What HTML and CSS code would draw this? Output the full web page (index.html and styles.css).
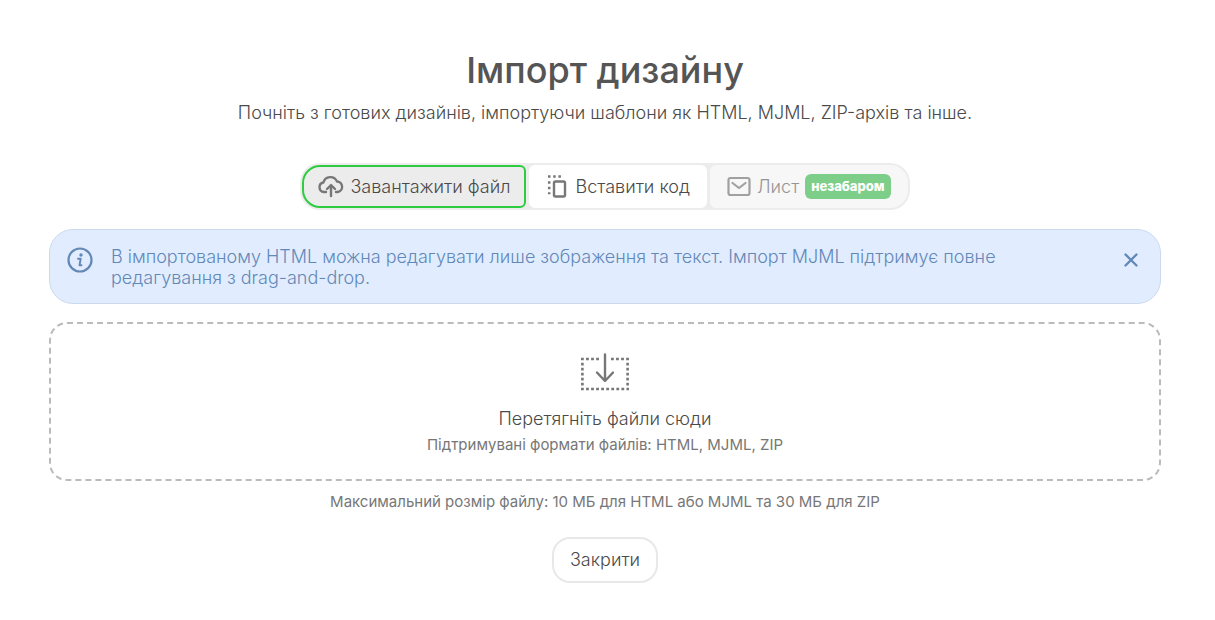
FILE: index.html
```html
<!DOCTYPE html>
<html lang="uk">

<head>
    <meta charset="UTF-8">
    <meta name="viewport" content="width=device-width, initial-scale=1.0">
    <title>Імпорт дизайну</title>
    <link rel="stylesheet" href="styles.css">
</head>

<body>
    <main class="import">
        <h1 class="title">Імпорт дизайну</h1>
        <p class="subtitle">Почніть з готових дизайнів, імпортуючи шаблони як HTML, MJML, ZIP-архів та інше.</p>

        <div class="tabs">
            <button type="button" class="tab tab-active">
                <svg class="tab-icon" width="26" height="24" viewBox="0 0 26 24" fill="none" stroke="currentColor" stroke-width="2.4" stroke-linecap="round" stroke-linejoin="round">
                    <path d="M8 17H6a4.800 4.800 0 0 1-.6-9.500A7.200 7.200 0 0 1 19 6.500a5.300 5.300 0 0 1 .8 10.500H18" />
                    <path d="M13 21V10.500M9 14l4-4 4 4" />
                </svg>
                Завантажити файл
            </button>
            <button type="button" class="tab">
                <svg class="tab-icon" width="20" height="24" viewBox="0 0 20 24" fill="none" stroke="currentColor">
                    <rect x="7" y="6.500" width="11" height="15" rx="1.500" stroke-width="2.400" />
                    <path d="M1 1.500h14" stroke-width="2.500" stroke-dasharray="2.500 2.700" />
                    <path d="M2.200 6.300v13" stroke-width="2.500" stroke-dasharray="2.500 3" />
                </svg>
                Вставити код
            </button>
            <button type="button" class="tab tab-disabled" disabled>
                <svg class="tab-icon" width="24" height="24" viewBox="0 0 24 24" fill="none" stroke="currentColor" stroke-width="2.2" stroke-linecap="round" stroke-linejoin="round">
                    <rect x="1.500" y="3" width="21" height="17" rx="2" />
                    <path d="M5.500 8l6.500 5 6.500-5" />
                </svg>
                Лист
                <span class="badge">незабаром</span>
            </button>
        </div>

        <div class="notice">
            <svg class="notice-icon" width="26" height="26" viewBox="0 0 26 26" fill="none" stroke="currentColor" stroke-linecap="round" stroke-linejoin="round">
                <circle cx="13" cy="13" r="11.500" stroke-width="2.200" />
                <circle cx="14" cy="8" r="1.700" fill="currentColor" stroke="none" />
                <path d="M11 11.800h2.700L12.500 18.200h2" stroke-width="1.900" />
            </svg>
            <p class="notice-text">В імпортованому HTML можна редагувати лише зображення та текст. Імпорт MJML підтримує повне редагування з drag-and-drop.</p>
            <button type="button" class="notice-close" aria-label="Закрити">
                <svg width="14" height="14" viewBox="0 0 14 14" fill="none" stroke="currentColor" stroke-width="2.400" stroke-linecap="round">
                    <path d="M1.500 1.500l11 11M12.500 1.500l-11 11" />
                </svg>
            </button>
        </div>

        <div class="dropzone">
            <svg width="50" height="38" viewBox="0 0 50 38" fill="none" stroke="currentColor">
                <path d="M1 6h18M31 6h18M1 36h48" stroke-width="2.600" stroke-dasharray="2.800 2.250" />
                <path d="M2.400 9.700v25M47.600 9.700v25" stroke-width="2.600" stroke-dasharray="2.800 2.200" />
                <path d="M25 1.500v26M17 19.500l8 8.500 8-8.500" stroke-width="2.400" stroke-linecap="round" stroke-linejoin="round" />
            </svg>
            <p class="dropzone-title">Перетягніть файли сюди</p>
            <p class="hint">Підтримувані формати файлів: HTML, MJML, ZIP</p>
        </div>
        <p class="hint">Максимальний розмір файлу: 10 МБ для HTML або MJML та 30 МБ для ZIP</p>

        <button type="button" class="close">Закрити</button>
    </main>
</body>

</html>
```
FILE: styles.css
```css
* {
    box-sizing: border-box;
}

body {
    margin: 0;
    background: #fff;
    color: #4a4a4a;
    font-family: Inter, "Open Sans", sans-serif;
    font-size: 18px;
    font-weight: 300;
    line-height: 22px;
}

h1,
p {
    margin: 0;
}

button {
    margin: 0;
    font: inherit;
    font-weight: 350;
    color: inherit;
    cursor: pointer;
}

svg {
    display: block;
    flex-shrink: 0;
}

.import {
    display: flex;
    flex-direction: column;
    align-items: center;
    padding: 48px 54px 36px 49px;
}

.title {
    color: #555;
    font-size: 36px;
    line-height: 44px;
    font-weight: 450;
    text-align: center;
}

.subtitle {
    margin-top: 10px;
    text-align: center;
}

.tabs {
    display: flex;
    gap: 3px;
    margin-top: 39px;
    padding: 2px;
    border-radius: 20px;
    background: #ececec;
}

.tab {
    display: flex;
    align-items: center;
    gap: 6px;
    height: 43px;
    padding: 0 14px;
    border: 2px solid #fff;
    border-radius: 6px;
    background: #fff;
}

.tab-icon {
    color: #777;
}

.tab:nth-child(2) {
    gap: 8px;
    padding: 0 15px 0 16px;
}

.tab-active {
    border-color: #2ecc40;
    border-radius: 18px 6px 6px 18px;
    background: #ececec;
}

.tab-disabled {
    padding: 0 15px;
    border-color: #f7f7f7;
    border-radius: 6px 18px 18px 6px;
    background: #f7f7f7;
    color: #959595;
    cursor: default;
}

.tab-disabled .tab-icon {
    color: #a0a0a0;
}

.badge {
    padding: 0 6px;
    border-radius: 6px;
    background: #7dce88;
    color: #fff;
    font-size: 13px;
    line-height: 25px;
    font-weight: 800;
}

.notice {
    display: flex;
    align-items: flex-start;
    width: 100%;
    margin-top: 19px;
    padding: 16px 20px 15px 17px;
    border: 1px solid #cbdaee;
    border-radius: 24px;
    background: #e1edfe;
    color: #6388b8;
}

.notice-icon {
    margin-top: 1px;
}

.notice-text {
    flex: 1;
    margin: 0 120px 0 18px;
    line-height: 21px;
}

.notice-close {
    padding: 7px 2px;
    border: none;
    background: none;
}

.dropzone {
    display: flex;
    flex-direction: column;
    align-items: center;
    width: 100%;
    margin: 18px 0 10px;
    padding: 29px 20px 23px;
    border: 2px dashed #bbb;
    border-radius: 18px;
    color: #777;
}

.dropzone-title {
    margin: 17px 0 4px;
    color: #4a4a4a;
}

.hint {
    color: #777;
    font-size: 15px;
    font-weight: 400;
    text-align: center;
}

.close {
    margin-top: 24px;
    padding: 10px 16px;
    border: 2px solid #e8e8e8;
    border-radius: 18px;
    background: #fff;
}
```
